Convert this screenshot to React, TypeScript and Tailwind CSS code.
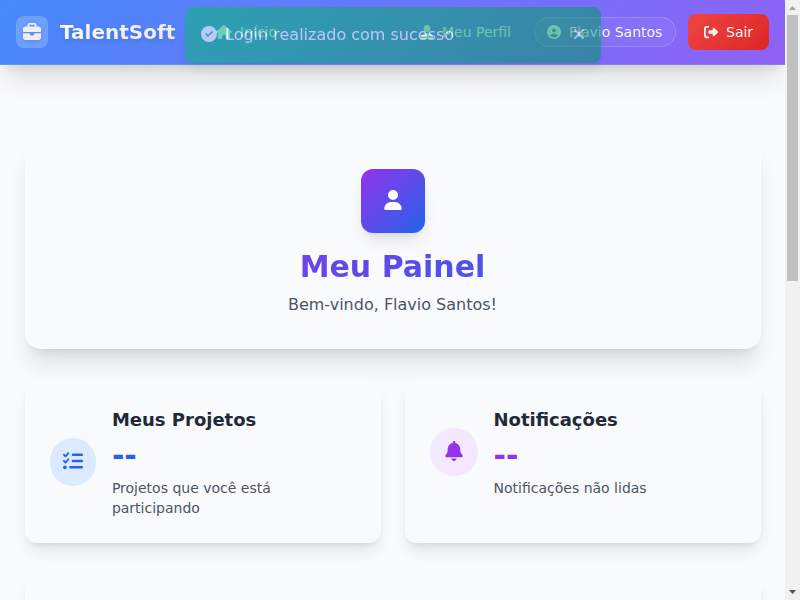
import { FaBriefcase, FaHouse, FaUser, FaCircleUser, FaRightFromBracket, FaCircleCheck, FaListCheck, FaBell, FaXmark } from "react-icons/fa6";
import type { ReactNode } from "react";

const glass = "border border-white/10 bg-[#f9fafc]";

function Header() {
  return (
    <header className="relative z-10 flex h-[65px] w-[785px] shrink-0 items-center border-b border-white/10 bg-[linear-gradient(135deg,#458afa,#9061f6)] px-4 shadow-xl">
      <div className="flex size-8 items-center justify-center rounded-lg bg-white/20 text-[18px] text-[#ebedf0]">
        <FaBriefcase className="drop-shadow-sm" />
      </div>
      <span className="ml-3 w-[156px] bg-[linear-gradient(135deg,#f9fafb,#e5e7eb)] bg-clip-text text-xl font-bold text-transparent drop-shadow-[0_2px_2px_rgba(0,0,0,0.12)]">TalentSoft</span>
      <nav className="flex w-[295px] items-center text-sm text-white/90">
        <a className="flex w-[204px] items-center gap-2"><FaHouse className="h-[14px] w-4" />Início</a>
        <a className="flex items-center gap-2"><FaUser className="w-[14px] text-[14px]" />Meu Perfil</a>
      </nav>
      <div className="ml-auto flex shrink-0 items-center gap-3 text-sm text-white/95">
        <div className="flex h-[30px] w-[142px] items-center gap-2 rounded-full border border-white/20 bg-white/5 pl-3">
          <FaCircleUser className="size-[14px]" />
          <span className="whitespace-nowrap">Flavio Santos</span>
        </div>
        <button className="flex h-9 w-[81px] items-center gap-2 rounded-lg bg-[linear-gradient(135deg,#ef4444,#dc2626)] pl-4">
          <FaRightFromBracket className="size-[14px]" />Sair
        </button>
      </div>
    </header>
  );
}

function Toast() {
  return (
    <div className="absolute left-[185px] top-[7px] z-20 flex h-14 w-[416px] items-center rounded-lg bg-[linear-gradient(135deg,#10b981,#059669)] px-4 pb-0.5 text-white opacity-[0.57] shadow-lg">
      <FaCircleCheck className="size-4" />
      <span className="ml-2 pt-0.5 text-base">Login realizado com sucesso</span>
      <FaXmark className="mr-[-2px] ml-auto size-4 text-white/80" />
    </div>
  );
}

function StatCard({ icon, circle, title, value, tone, note }: { icon: ReactNode; circle: string; title: string; value: string; tone: string; note: string }) {
  return (
    <section className={`h-[162px] rounded-xl p-6 shadow-lg ${glass}`}>
      <div className="flex items-center">
        <div className={`flex h-12 shrink-0 items-center justify-center rounded-full pb-0.5 text-xl ${circle} ${tone}`}>{icon}</div>
        <div className="ml-4">
          <h3 className="mb-1 text-lg leading-7 font-bold text-[#1f2937]">{title}</h3>
          <p className={`mb-1 text-3xl leading-9 font-bold ${tone}`}>{value}</p>
          <p className="w-[200px] text-sm text-[#4b5563]">{note}</p>
        </div>
      </div>
    </section>
  );
}

function Scrollbar() {
  return (
    <div className="relative z-30 flex h-[600px] w-[15px] shrink-0 flex-col items-center justify-between bg-[#f1f1f1]">
      <div>
        <svg className="block h-[15px] w-[15px]" viewBox="0 0 15 15"><path d="M4 10h7L7.5 6z" fill="#a3a3a3" /></svg>
        <div className="ml-[2px] h-[266px] w-[11px] bg-[#c1c1c1]" />
      </div>
      <svg className="block h-[15px] w-[15px]" viewBox="0 0 15 15"><path d="M4 5h7L7.5 9z" fill="#505050" /></svg>
    </div>
  );
}

export default function App() {
  return (
    <div className="relative flex h-[600px] w-[800px] overflow-hidden bg-[#f9fafc] font-['DejaVu_Sans',sans-serif]">
      <div className="flex w-[785px] flex-col">
        <Header />
        <main className="mx-auto mt-[71px] flex w-[736px] flex-col gap-8">
          <section className={`flex h-[213px] shrink-0 flex-col items-center rounded-2xl px-8 pt-8 shadow-xl ${glass}`}>
            <div className="mb-4 flex size-16 items-center justify-center rounded-xl bg-[linear-gradient(135deg,#9333ea,#2563eb)] pb-0.5 text-xl text-white shadow-lg">
              <FaUser />
            </div>
            <h1 className="mb-2 w-full bg-[linear-gradient(90deg,#9333ea,#2563eb)] bg-clip-text text-center text-3xl leading-9 font-bold text-transparent">Meu Painel</h1>
            <p className="text-base text-[#4b5563]">Bem-vindo, Flavio Santos!</p>
          </section>
          <div className="grid shrink-0 grid-cols-2 gap-6">
            <StatCard icon={<FaListCheck />} circle="w-[46.4px] bg-[#dbeafe]" tone="text-[#2563eb]" title="Meus Projetos" value="--" note="Projetos que você está participando" />
            <StatCard icon={<FaBell />} circle="w-12 bg-[#f3e8ff]" tone="text-[#9333ea]" title="Notificações" value="--" note="Notificações não lidas" />
          </div>
          <section className={`h-40 shrink-0 rounded-xl shadow-lg ${glass}`} />
        </main>
      </div>
      <Scrollbar />
      <Toast />
    </div>
  );
}
